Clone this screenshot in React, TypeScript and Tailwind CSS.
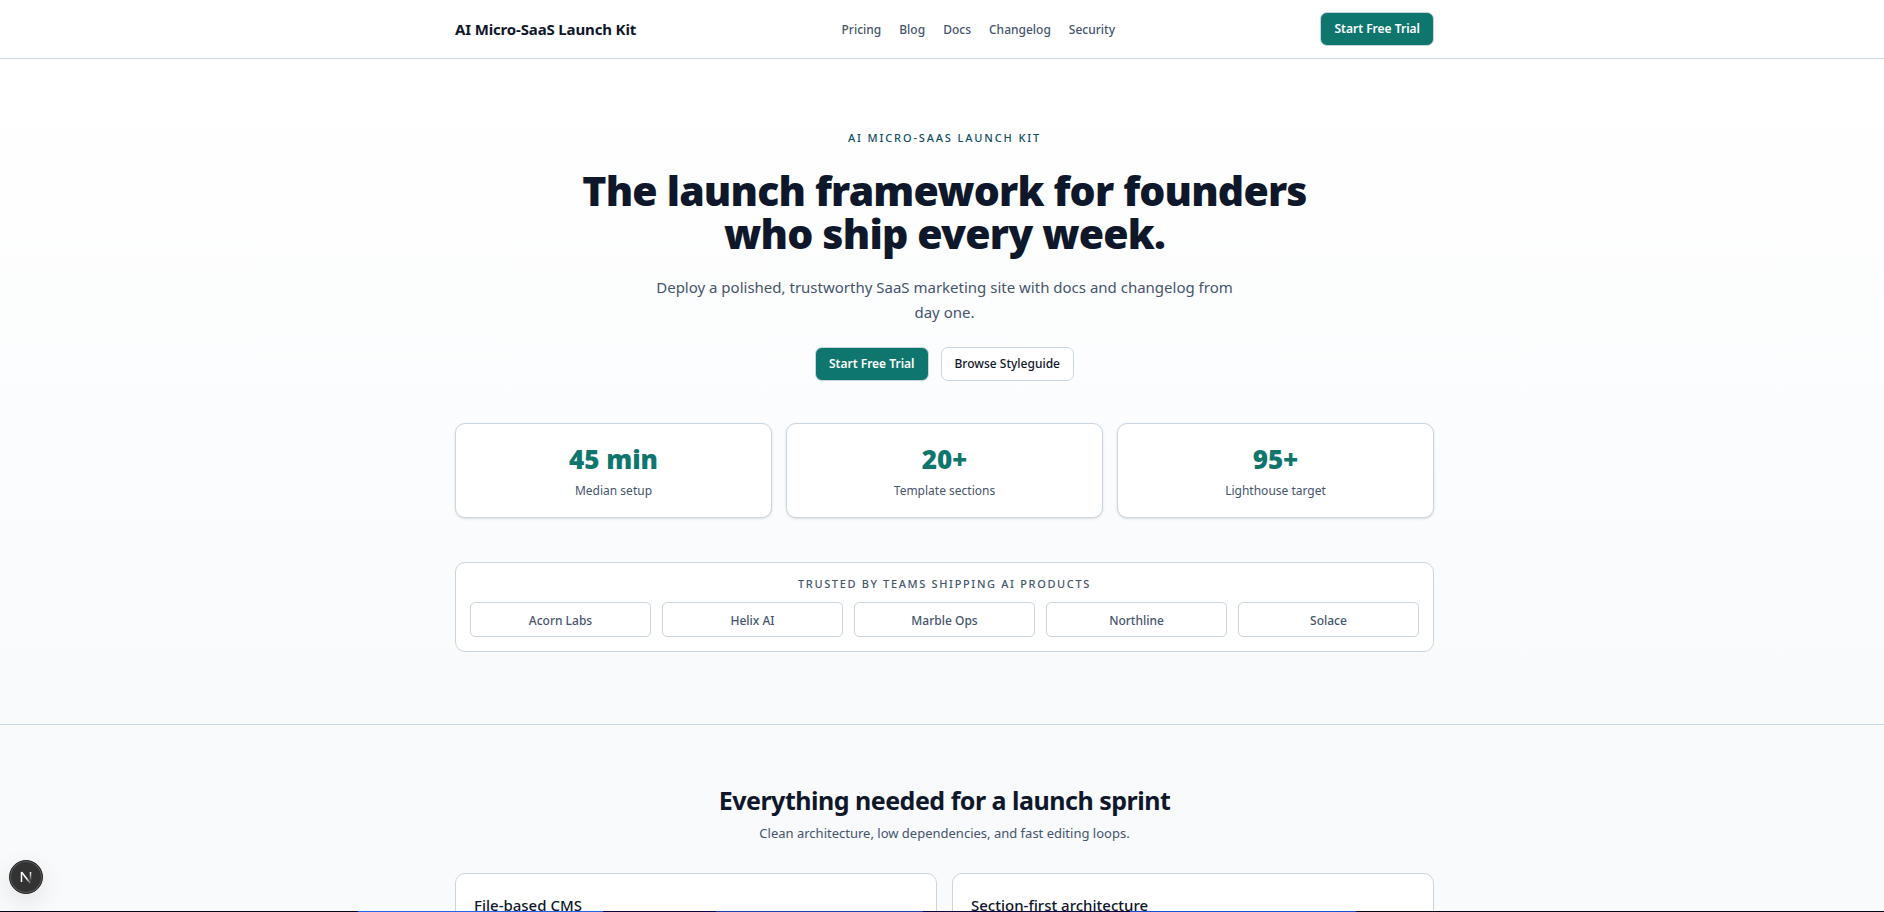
import type { ReactNode } from "react";

const NAV_LINKS = ["Pricing", "Blog", "Docs", "Changelog", "Security"];

const STATS = [
  { value: "45 min", label: "Median setup" },
  { value: "20+", label: "Template sections" },
  { value: "95+", label: "Lighthouse target" },
];

const TEAMS = ["Acorn Labs", "Helix AI", "Marble Ops", "Northline", "Solace"];

const FEATURES = ["File-based CMS", "Section-first architecture"];

function Container({ children, className = "" }: { children: ReactNode; className?: string }) {
  return (
    <div className="pl-[5px]">
      <div className={`mx-auto w-full max-w-[979px] ${className}`}>{children}</div>
    </div>
  );
}

function ButtonLink({ children, variant = "primary" }: { children: ReactNode; variant?: "primary" | "outline" }) {
  return (
    <a
      href="#"
      className={`inline-flex h-[34px] items-center justify-center rounded-[7px] border border-slate-300 px-[13px] text-xs ${
        variant === "primary" ? "bg-[#0f766e] font-semibold text-white" : "bg-white font-medium text-slate-900"
      }`}
    >
      {children}
    </a>
  );
}

function SiteHeader() {
  return (
    <header className="border-b border-slate-300 bg-white">
      <Container className="flex h-[58px] items-center justify-between">
        <a href="#" className="text-[15px] font-bold tracking-[-0.01em] text-slate-900">
          AI Micro-SaaS Launch Kit
        </a>
        <nav aria-label="Main" className="flex gap-[18px] pt-px text-xs font-medium text-slate-600">
          {NAV_LINKS.map((label) => (
            <a key={label} href="#">
              {label}
            </a>
          ))}
        </nav>
        <ButtonLink>Start Free Trial</ButtonLink>
      </Container>
    </header>
  );
}

function Hero() {
  return (
    <section className="border-b border-slate-300 bg-linear-to-b from-white to-slate-50 pt-[69px] pb-[72px]">
      <Container>
        <div className="text-center">
          <p className="text-[11px] leading-5 font-medium tracking-[0.17em] text-cyan-900 uppercase">
            AI Micro-SaaS Launch Kit
          </p>
          <h1 className="mx-auto mt-[21px] max-w-[762px] text-[41px] leading-[43px] font-black tracking-[-0.02em] text-slate-900">
            The launch framework for founders who ship every week.
          </h1>
          <p className="mx-auto mt-5 max-w-[600px] text-[15px] leading-[25px] text-slate-600">
            Deploy a polished, trustworthy SaaS marketing site with docs and changelog from day one.
          </p>
          <div className="mt-[22px] flex justify-center gap-3">
            <ButtonLink>Start Free Trial</ButtonLink>
            <ButtonLink variant="outline">Browse Styleguide</ButtonLink>
          </div>
        </div>

        <dl className="mt-[42px] grid grid-cols-3 gap-3.5">
          {STATS.map((stat) => (
            <div
              key={stat.label}
              className="flex flex-col-reverse rounded-[10px] border border-slate-300 bg-white pt-[19px] pb-4 text-center shadow-sm"
            >
              <dt className="mt-1.5 text-xs leading-5 text-slate-600">{stat.label}</dt>
              <dd className="text-[26px] leading-8 font-black text-[#0f766e]">{stat.value}</dd>
            </div>
          ))}
        </dl>

        <div className="mt-11 rounded-[10px] border border-slate-300 bg-white px-3.5 pt-3 pb-3.5">
          <p className="text-center text-[11px] leading-[18px] font-medium tracking-[0.15em] text-slate-600 uppercase">
            Trusted by teams shipping AI products
          </p>
          <ul className="mt-[9px] grid grid-cols-5 gap-[11px]">
            {TEAMS.map((team) => (
              <li
                key={team}
                className="rounded-[5px] border border-slate-300 pt-[9px] pb-[7px] text-center text-xs leading-[17px] font-medium text-slate-600"
              >
                {team}
              </li>
            ))}
          </ul>
        </div>
      </Container>
    </section>
  );
}

function Features() {
  return (
    <section className="pt-[59px]">
      <Container>
        <div className="text-center">
          <h2 className="text-[25px] leading-8 font-bold tracking-[-0.02em] text-slate-900">
            Everything needed for a launch sprint
          </h2>
          <p className="mt-[7px] text-[13px] leading-5 text-slate-600">
            Clean architecture, low dependencies, and fast editing loops.
          </p>
        </div>
        <div className="mt-[30px] grid grid-cols-2 gap-[15px]">
          {FEATURES.map((title) => (
            <article key={title} className="h-36 rounded-[10px] border border-slate-300 bg-white px-[18px] py-[19px]">
              <h3 className="text-[15px] leading-6 font-medium text-slate-900">{title}</h3>
            </article>
          ))}
        </div>
      </Container>
    </section>
  );
}

function DevToolsBadge() {
  return (
    <button
      type="button"
      aria-label="Open dev tools"
      className="fixed bottom-[18px] left-[9px] flex size-[34px] items-center justify-center rounded-full border border-neutral-800 bg-[#333] shadow-[inset_0_0_0_1px_#5c5c5c,0_8px_24px_rgba(0,0,0,0.1)]"
    >
      <svg viewBox="0 0 14 14" className="size-3.5" fill="none" aria-hidden>
        <defs>
          <linearGradient id="n-diagonal" x1="8" y1="8" x2="12" y2="14" gradientUnits="userSpaceOnUse">
            <stop stopColor="#fff" />
            <stop offset="1" stopColor="#fff" stopOpacity="0" />
          </linearGradient>
          <linearGradient id="n-stem" x1="11" y1="2" x2="11" y2="11" gradientUnits="userSpaceOnUse">
            <stop stopColor="#fff" />
            <stop offset="1" stopColor="#fff" stopOpacity="0" />
          </linearGradient>
        </defs>
        <path d="M2.5 2L11.5 13.5" stroke="url(#n-diagonal)" strokeWidth="1.6" />
        <path d="M2.5 12V2" stroke="#fff" strokeWidth="1.5" />
        <path d="M11.5 2v9" stroke="url(#n-stem)" strokeWidth="1.5" />
      </svg>
    </button>
  );
}

export default function App() {
  return (
    <div className="h-screen overflow-hidden bg-slate-50 font-['Noto_Sans','Open_Sans',sans-serif] text-slate-900">
      <SiteHeader />
      <main>
        <Hero />
        <Features />
      </main>
      <DevToolsBadge />
      <div aria-hidden className="fixed inset-x-0 bottom-0 flex h-px bg-[#020617]">
        <span className="w-[19%]" />
        <span className="w-[13%] bg-[#2563eb]" />
        <span className="w-[6%] bg-[#0b0740]" />
        <span className="w-[11%] bg-[#1e40af]" />
        <span className="w-[11%] bg-[#0b0740]" />
        <span className="w-[12%] bg-[#1d4ed8]" />
      </div>
    </div>
  );
}
